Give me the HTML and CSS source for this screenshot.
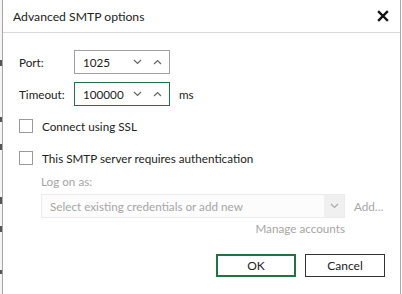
FILE: index.html
```html
<!DOCTYPE html>
<html lang="en">
<head>
  <meta charset="UTF-8">
  <title>Advanced SMTP options</title>
  <link rel="stylesheet" href="styles.css">
</head>
<body>
  <div class="backdrop">
    <span class="mark m1"></span>
    <span class="mark m2"></span>
    <span class="mark m3"></span>
    <span class="mark m4"></span>
    <span class="mark m5"></span>
    <span class="mark m6"></span>
  </div>
  <div class="dialog">
    <div class="dialog-header">
      <span class="dialog-title">Advanced SMTP options</span>
      <svg class="close-icon" width="12" height="12" viewBox="0 0 12 12">
        <path d="M2 2 L10 10 M10 2 L2 10" stroke="#111" stroke-width="2.4" stroke-linecap="square"/>
      </svg>
    </div>
    <div class="dialog-body">
      <div class="field-row">
        <label class="field-label">Port:</label>
        <div class="spin">
          <span class="spin-value">1025</span>
          <svg class="chev" width="9" height="6" viewBox="0 0 9 6"><polyline points="1,1 4.5,4.5 8,1" fill="none" stroke="#666" stroke-width="1.2"/></svg>
          <svg class="chev" width="9" height="6" viewBox="0 0 9 6"><polyline points="1,5 4.5,1.5 8,5" fill="none" stroke="#666" stroke-width="1.2"/></svg>
        </div>
      </div>
      <div class="field-row">
        <label class="field-label">Timeout:</label>
        <div class="spin spin-focus">
          <span class="spin-value">100000</span>
          <svg class="chev" width="9" height="6" viewBox="0 0 9 6"><polyline points="1,1 4.5,4.5 8,1" fill="none" stroke="#666" stroke-width="1.2"/></svg>
          <svg class="chev" width="9" height="6" viewBox="0 0 9 6"><polyline points="1,5 4.5,1.5 8,5" fill="none" stroke="#666" stroke-width="1.2"/></svg>
        </div>
        <span class="unit">ms</span>
      </div>

      <div class="check-row first">
        <span class="checkbox"></span>
        <span>Connect using SSL</span>
      </div>
      <div class="check-row">
        <span class="checkbox"></span>
        <span>This SMTP server requires authentication</span>
      </div>

      <div class="auth">
        <div class="muted logon">Log on as:</div>
        <div class="combo-row">
          <div class="combo">
            <span class="combo-text">Select existing credentials or add new</span>
            <span class="combo-btn">
              <svg width="9" height="6" viewBox="0 0 9 6"><polyline points="1,1 4.5,4.5 8,1" fill="none" stroke="#aaa" stroke-width="1.2"/></svg>
            </span>
          </div>
          <span class="muted add">Add...</span>
        </div>
        <div class="muted manage">Manage accounts</div>
      </div>

      <div class="buttons">
        <button class="btn btn-ok">OK</button>
        <button class="btn">Cancel</button>
      </div>
    </div>
  </div>
</body>
</html>
```

FILE: styles.css
```css
body {
  margin: 0;
  width: 402px;
  height: 294px;
  display: flex;
  background: #fff;
  font-family: Lato, "Noto Sans", sans-serif;
  font-size: 11.7px;
  color: #222;
  overflow: hidden;
}

.backdrop {
  width: 2px;
  position: relative;
  background: #f4f4f4;
}

.mark {
  position: absolute;
  left: 0;
  width: 2px;
  background: #555;
}

.m1 { top: 60px; height: 6px; }
.m2 { top: 117px; height: 5px; }
.m3 { top: 144px; height: 6px; }
.m4 { top: 197px; height: 7px; }
.m5 { top: 226px; height: 6px; }
.m6 { top: 270px; height: 4px; }

.dialog {
  width: 397px;
  border-left: 1px solid #a8a8a8;
  border-right: 1px solid #a8a8a8;
  background: #fff;
  display: flex;
  flex-direction: column;
}

.dialog-header {
  height: 33px;
  border-bottom: 1px solid #dadada;
  display: flex;
  align-items: center;
  justify-content: space-between;
  padding: 0 11px 0 10px;
  box-sizing: border-box;
}

.dialog-title {
  font-size: 12.2px;
  color: #222;
  margin-top: 1px;
}

.close-icon {
  margin-top: -1px;
}

.dialog-body {
  padding: 17px 0 0 16px;
  display: flex;
  flex-direction: column;
}

.field-row {
  display: flex;
  align-items: center;
  height: 24px;
  margin-bottom: 8px;
}

.field-label {
  width: 55px;
}

.spin {
  width: 96px;
  height: 24px;
  box-sizing: border-box;
  border: 1px solid #a0a0a0;
  display: flex;
  align-items: center;
  padding-left: 8px;
}

.spin-focus {
  border-color: #217346;
}

.spin-value {
  flex: 1;
}

.chev {
  margin-right: 11px;
}

.chev + .chev {
  margin-right: 7px;
}

.unit {
  margin-left: 9px;
}

.check-row {
  display: flex;
  align-items: center;
  height: 18px;
  margin-top: 14px;
}

.check-row.first {
  margin-top: 3px;
}

.checkbox {
  width: 12px;
  height: 12px;
  border: 1px solid #999;
  margin-right: 9px;
}

.auth {
  padding-left: 22px;
  margin-top: 5px;
}

.muted {
  color: #a6a6a6;
}

.logon {
  height: 18px;
  line-height: 18px;
}

.combo-row {
  display: flex;
  align-items: center;
  margin-top: 4px;
}

.combo {
  width: 304px;
  height: 24px;
  box-sizing: border-box;
  border: 1px solid #ececec;
  background: #fcfcfc;
  display: flex;
  align-items: center;
  padding-left: 8px;
}

.combo-text {
  flex: 1;
  color: #a6a6a6;
}

.combo-btn {
  width: 20px;
  height: 22px;
  background: #f0f0f0;
  display: flex;
  align-items: center;
  justify-content: center;
}

.add {
  margin-left: 9px;
}

.manage {
  margin-top: 3px;
  width: 304px;
  text-align: right;
}

.buttons {
  display: flex;
  justify-content: flex-end;
  gap: 9px;
  margin-top: 19px;
  padding-right: 15px;
}

.btn {
  width: 80px;
  height: 23px;
  box-sizing: border-box;
  background: #fff;
  border: 1px solid #333;
  font-family: inherit;
  font-size: 12px;
  color: #222;
  padding: 0;
}

.btn-ok {
  border: 2px solid #217346;
}
```
